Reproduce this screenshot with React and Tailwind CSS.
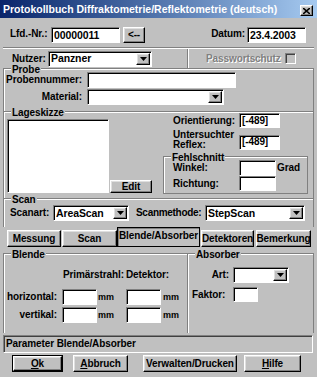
import React from 'react';

const raised =
  'bg-[#c0c0c0] border border-t-white border-l-white border-r-black border-b-black shadow-[inset_-1px_-1px_0_#808080,inset_1px_1px_0_#dfdfdf]';
const sunken =
  'bg-white border border-t-[#808080] border-l-[#808080] border-r-white border-b-white shadow-[inset_1px_1px_0_#000]';

const Field = ({ className = '', children }) => (
  <div className={`${sunken} flex items-center pl-[2px] leading-none ${className}`}>{children}</div>
);

const DropBtn = () => (
  <div className={`${raised} w-[14px] my-[1px] mr-[1px] flex items-center justify-center`}>
    <svg width="7" height="4" viewBox="0 0 7 4">
      <path d="M0 0h7L3.5 4z" fill="#000" />
    </svg>
  </div>
);

const Combo = ({ className = '', value }) => (
  <div className={`${sunken} flex items-stretch ${className}`}>
    <span className="flex-1 flex items-center pl-[2px] leading-none">{value}</span>
    <DropBtn />
  </div>
);

const Button = ({ className = '', children }) => (
  <div className={`${raised} flex items-center justify-center leading-none ${className}`}>{children}</div>
);

// gruppenrahmen mit beschriftung auf der oberen linie
const Group = ({ label, className = '', children }) => (
  <div className={`relative border-[#808080] shadow-[inset_1px_1px_0_#fff] ${className}`}>
    <span className="absolute -top-[4px] left-[7px] bg-[#c0c0c0] px-[1px] leading-[10px]">{label}</span>
    {children}
  </div>
);

const Tab = ({ className = '', active, children }) => (
  <div
    className={`flex items-center justify-center leading-none ${
      active
        ? 'h-[20px] bg-[#c0c0c0] border border-black shadow-[inset_1px_1px_0_#808080]'
        : `h-[17px] ${raised}`
    } ${className}`}
  >
    {children}
  </div>
);

const App = () => {
  return (
    <div className="w-[317px] h-[377px] bg-[#c0c0c0] font-['Liberation_Sans',Arial,sans-serif] font-bold text-[10px] tracking-[-0.1px] leading-none text-black overflow-hidden">
      {/* Titelleiste */}
      <div className="h-[18px] flex items-center bg-gradient-to-r from-[#0a246a] to-[#a6caf0]">
        <span className="pl-[3px] text-white text-[10.5px] tracking-normal flex-1">
          Protokollbuch Diffraktometrie/Reflektometrie (deutsch)
        </span>
        <div className={`${raised} w-[13px] h-[11px] mr-[4px] mt-[3px] flex items-center justify-center`}>
          <svg width="7" height="6" viewBox="0 0 7 6">
            <path d="M0 0l7 6M7 0L0 6" stroke="#000" strokeWidth="1.6" />
          </svg>
        </div>
      </div>

      <div className="px-[3px]">
        {/* Lfd.-Nr. / Datum */}
        <div className="h-[29px] flex items-end pb-[4px]">
          <span className="ml-[7px] w-[41px] self-center mt-[6px]">Lfd.-Nr.:</span>
          <Field className="w-[69px] h-[16px] text-[10.5px]">00000011</Field>
          <Button className="ml-[3px] w-[22px] h-[16px]">&lt;--</Button>
          <span className="flex-1" />
          <span className="mr-[2px] self-center mt-[6px]">Datum:</span>
          <Field className="w-[59px] h-[16px] mr-[8px] text-[10.5px]">23.4.2003</Field>
        </div>
        <div className="h-[2px] border-t border-t-[#808080] border-b border-b-white" />

        {/* Nutzer */}
        <div className="h-[19px] flex items-center">
          <span className="ml-[9px] w-[36px]">Nutzer:</span>
          <Combo className="w-[104px] h-[16px] text-[10.5px]" value="Panzner" />
          <div className="ml-[35px] w-[2px] self-stretch border-l border-l-[#808080] border-r border-r-white" />
          <span className="ml-[17px] w-[79px] text-[#808080] [text-shadow:1px_1px_0_#fff]">Passwortschutz</span>
          <div className="w-[11px] h-[11px] bg-[#c0c0c0] border border-t-[#808080] border-l-[#808080] border-r-white border-b-white shadow-[inset_1px_1px_0_#404040]" />
        </div>

        {/* Probe */}
        <Group label="Probe" className="h-[43px] border-t border-l border-r pt-[3px] flex flex-col gap-[1px]">
          <div className="flex items-center">
            <span className="w-[78px] text-right">Probennummer:</span>
            <Field className="ml-[5px] w-[149px] h-[16px]" />
          </div>
          <div className="flex items-center">
            <span className="w-[78px] text-right">Material:</span>
            <Combo className="ml-[5px] w-[137px] h-[16px]" />
          </div>
        </Group>

        {/* Lageskizze */}
        <Group label="Lageskizze" className="h-[87px] border-t border-l border-r flex">
          <div className="flex items-end pt-[6px] pb-[5px]">
            <div className={`${sunken} ml-[3px] w-[102px] h-[74px]`} />
            <Button className="ml-[1px] w-[42px] h-[13px]">Edit</Button>
          </div>
          <div className="ml-[11px] w-[145px] pt-[1px] flex flex-col">
            <div className="flex items-center h-[15px]">
              <span className="ml-[10px] w-[66px]">Orientierung:</span>
              <Field className="w-[41px] h-[15px]">[-489]</Field>
            </div>
            <div className="flex items-center h-[20px] mt-[2px]">
              <div className="ml-[10px] w-[66px] flex flex-col">
                <span className="leading-[10px]">Untersuchter</span>
                <span className="leading-[10px]">Reflex:</span>
              </div>
              <Field className="w-[41px] h-[15px] mt-[4px]">[-489]</Field>
            </div>
            <Group label="Fehlschnitt" className="mt-[6px] h-[38px] border pt-[3px] flex flex-col">
              <div className="flex items-center">
                <span className="ml-[9px] w-[66px]">Winkel:</span>
                <Field className="w-[37px] h-[16px]" />
                <span className="ml-[1px]">Grad</span>
              </div>
              <div className="flex items-center">
                <span className="ml-[9px] w-[66px]">Richtung:</span>
                <Field className="w-[37px] h-[15px]" />
              </div>
            </Group>
          </div>
        </Group>

        {/* Scan */}
        <Group label="Scan" className="h-[29px] border-t border-l border-r pt-[6px]">
          <div className="flex items-center">
            <span className="ml-[6px] w-[43px]">Scanart:</span>
            <Combo className="w-[76px] h-[16px] text-[10.5px]" value="AreaScan" />
            <span className="ml-[7px] w-[69px] tracking-[-0.3px]">Scanmethode:</span>
            <Combo className="w-[100px] h-[16px] text-[10.5px]" value="StepScan" />
          </div>
        </Group>

        {/* Reiter */}
        <div className="h-[20px] flex items-end">
          <Tab className="ml-[4px] w-[54px]">Messung</Tab>
          <Tab className="ml-[1px] w-[55px]">Scan</Tab>
          <Tab className="w-[83px]" active>
            <span className="self-start pt-[3px]">Blende/Absorber</span>
          </Tab>
          <Tab className="ml-[1px] w-[53px]">Detektoren</Tab>
          <Tab className="ml-[2px] w-[55px]">Bemerkung</Tab>
        </div>

        {/* Reiterinhalt */}
        <div className="h-[88px] pt-[6px] flex">
          <Group label="Blende" className="w-[185px] h-[80px] border-t border-l border-r">
            <div className="mt-[15px] h-[12px] flex items-center">
              <span className="ml-[59px] w-[63px]">Primärstrahl:</span>
              <span>Detektor:</span>
            </div>
            <div className="mt-[8px] flex items-center">
              <span className="w-[53px] text-right">horizontal:</span>
              <Field className="ml-[5px] w-[35px] h-[16px]" />
              <span className="ml-[1px] w-[28px] text-[9px]">mm</span>
              <Field className="w-[35px] h-[16px]" />
              <span className="ml-[2px] text-[9px]">mm</span>
            </div>
            <div className="mt-[2px] flex items-center">
              <span className="w-[53px] text-right">vertikal:</span>
              <Field className="ml-[5px] w-[35px] h-[16px]" />
              <span className="ml-[1px] w-[28px] text-[9px]">mm</span>
              <Field className="w-[35px] h-[16px]" />
              <span className="ml-[2px] text-[9px]">mm</span>
            </div>
          </Group>
          <Group label="Absorber" className="flex-1 h-[80px] border-t border-r">
            <div className="mt-[13px] flex items-center">
              <span className="w-[41px] text-right">Art:</span>
              <Combo className="ml-[4px] w-[56px] h-[16px]" />
            </div>
            <div className="mt-[4px] flex items-center">
              <span className="pl-[4px] w-[45px]">Faktor:</span>
              <Field className="w-[25px] h-[15px]" />
            </div>
          </Group>
        </div>

        {/* Statuszeile */}
        <div className="h-[18px] mr-[1px] flex items-center pl-[2px] border border-t-[#808080] border-l-[#808080] border-r-white border-b-white shadow-[inset_1px_1px_0_#404040]">
          Parameter Blende/Absorber
        </div>

        {/* Knöpfe */}
        <div className="mt-[2px] flex">
          <div className="ml-[9px] w-[51px] h-[17px] border border-black flex">
            <Button className="flex-1">
              <span className="underline">O</span>k
            </Button>
          </div>
          <Button className="ml-[10px] w-[55px] h-[17px]">
            <span className="underline">A</span>bbruch
          </Button>
          <Button className="ml-[15px] w-[94px] h-[17px]">Verwalten/Drucken</Button>
          <Button className="ml-[7px] w-[57px] h-[17px]">
            <span className="underline">H</span>ilfe
          </Button>
        </div>
      </div>
    </div>
  );
};

export default App;
